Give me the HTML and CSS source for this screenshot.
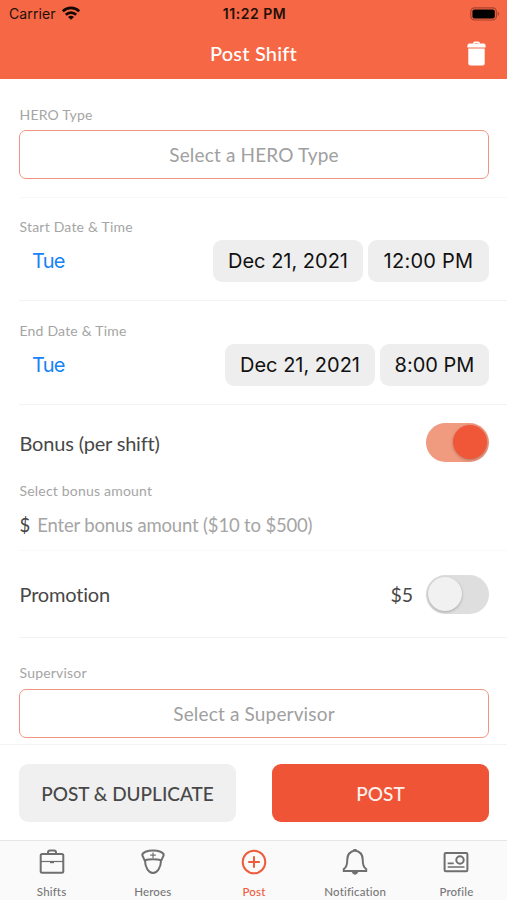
FILE: index.html
```html
<!DOCTYPE html>
<html lang="en">
<head>
<meta charset="utf-8">
<title>Post Shift</title>
<link rel="stylesheet" href="styles.css">
</head>
<body>
<div class="app">
  <header class="header">
    <div class="status">
      <div class="carrier"><span>Carrier</span>
        <svg class="wifi" width="18" height="14" viewBox="0 0 18 14"><g fill="none" stroke="#160905" stroke-width="2.7"><path d="M.8 5.300a11.600 11.600 0 0 1 16.400 0"/><path d="M3.800 8.700a7.400 7.400 0 0 1 10.400 0"/></g><path d="M9 13.800 6 10.900a4.200 4.200 0 0 1 6 0z" fill="#160905"/></svg>
      </div>
      <span class="clock">11:22 PM</span>
      <svg class="battery" width="30" height="14" viewBox="0 0 30 14"><rect x=".8" y=".8" width="25.600" height="12.200" rx="3.800" fill="none" stroke="#a8432d" stroke-width="1.200"/><rect x="2.400" y="2.400" width="22.400" height="9" rx="2.200" fill="#000"/><path d="M27.700 4.800c2 .8 2 3.400 0 4.200z" fill="#a8432d"/></svg>
    </div>
    <div class="navbar">
      <h1>Post Shift</h1>
      <svg class="trash" width="19" height="25" viewBox="0 0 19 25" fill="#fff"><path d="M6 2.600Q6 .5 8 .5h3Q13 .5 13 2.600h4Q18.600 2.800 18.600 5v1.500H.4V5Q.4 2.800 2 2.600zM7.500 2.600h4V1.900h-4z" fill-rule="evenodd"/><path d="M1.300 7.600h16.400v15q0 2-2 2H3.300q-2 0-2-2z"/></svg>
    </div>
  </header>

  <main class="form">
    <section class="block hero">
      <div class="label">HERO Type</div>
      <div class="select"><span>Select a HERO Type</span></div>
    </section>
    <section class="block date">
      <div class="label">Start Date &amp; Time</div>
      <div class="row"><span class="day">Tue</span><span class="pill pill-date">Dec 21, 2021</span><span class="pill pill-noon">12:00 PM</span></div>
    </section>
    <section class="block date">
      <div class="label">End Date &amp; Time</div>
      <div class="row"><span class="day">Tue</span><span class="pill pill-date">Dec 21, 2021</span><span class="pill pill-eve">8:00 PM</span></div>
    </section>
    <section class="block bonus">
      <div class="row"><span class="name">Bonus (per shift)</span><span class="toggle on"></span></div>
      <div class="label bonus-label">Select bonus amount</div>
      <div class="amount"><span class="dollar">$</span><span class="placeholder">Enter bonus amount ($10 to $500)</span></div>
    </section>
    <section class="block promo">
      <span class="name">Promotion</span><span class="price">$5</span><span class="toggle"></span>
    </section>
    <section class="block supervisor">
      <div class="label">Supervisor</div>
      <div class="select"><span>Select a Supervisor</span></div>
    </section>
  </main>

  <div class="actions">
    <div class="button"><span>POST &amp; DUPLICATE</span></div>
    <div class="button primary"><span>POST</span></div>
  </div>

  <nav class="tabs">
    <div class="tab"><svg width="28" height="28" viewBox="0 0 28 28"><rect x="2.700" y="6" width="22.600" height="18.800" rx="1.500"/><path d="M10 6V4.500Q10 2.500 12 2.500h4q2 0 2 2V6"/><path d="M3 13.500h22" stroke-width="1.200"/><path d="M12 14.200h4" stroke-width="2"/></svg><span>Shifts</span></div>
    <div class="tab"><svg width="28" height="28" viewBox="0 0 28 28"><path d="M5.600 12.300 3.300 7.200C3.100 4.400 8.500 2.500 14 2.500s10.900 1.900 10.700 4.700l-2.300 5.100C18 10.800 10 10.800 5.600 12.300z"/><path d="M6 12.500c0 6.500 3.500 12.500 8 12.500s8-6 8-12.500"/><path d="M14 4.500v5.500M11.200 7.200h5.600" stroke-width="1.200"/></svg><span>Heroes</span></div>
    <div class="tab active"><svg width="28" height="28" viewBox="0 0 28 28"><circle cx="14" cy="14" r="11.300"/><path d="M14 8.200v11.600M8.200 14h11.600"/></svg><span>Post</span></div>
    <div class="tab"><svg width="28" height="28" viewBox="0 0 28 28"><path d="M14 2.400c-5.500 1-7.700 4.300-7.700 9 0 5-.7 8-3.500 9.600v2h22.400v-2c-2.800-1.600-3.500-4.600-3.500-9.600 0-4.700-2.200-8-7.700-9z"/><path d="M10.700 24h6.600q-1 2.700-3.300 2.700T10.700 24z" fill="#6f6f6f" stroke="none"/><path d="M12.500 2h3" stroke-width="2"/></svg><span>Notification</span></div>
    <div class="tab"><svg width="28" height="28" viewBox="0 0 28 28"><rect x="2.600" y="5" width="22.800" height="18.300" rx="1.200"/><circle cx="18" cy="12" r="3.700"/><path d="M5.700 15.400h6M5.700 19h16.800" stroke-width="1.700"/></svg><span>Profile</span></div>
  </nav>
</div>
</body>
</html>
```
FILE: styles.css
```css
* { box-sizing: border-box; }
body { margin: 0; background: #fff; font-family: Lato, "Liberation Sans", sans-serif; font-variant-ligatures: none; }
.app { width: 507px; height: 900px; display: flex; flex-direction: column; overflow: hidden; }
span, h1, .label { white-space: nowrap; }

.header { height: 79px; background: #f66745; color: #fff; flex: none; }
.status { height: 28px; padding: 0 7px 0 9px; display: grid; grid-template-columns: 1fr auto 1fr; align-items: center; font: 400 14px/28px Inter, sans-serif; color: #24100a; }
.carrier { display: flex; align-items: center; gap: 6px; letter-spacing: .1px; }
.wifi { margin-top: -2px; }
.clock { font-weight: 600; letter-spacing: .55px; }
.battery { justify-self: end; margin-top: -1px; }
.navbar { height: 50px; padding: 0 21px; display: grid; grid-template-columns: 1fr auto 1fr; align-items: center; }
h1 { grid-column: 2; margin: 0; font-size: 20px; line-height: 48px; font-weight: 500; letter-spacing: .2px; }
.trash { justify-self: end; }

.form { height: 665px; flex: none; }
.block { margin-left: 19px; padding-right: 18px; border-bottom: 1px solid #f2f2f2; }
.label { font-size: 14px; line-height: 20px; color: #a5a5a5; letter-spacing: .2px; padding-left: .5px; }
.select { height: 49px; border: 1px solid #f19583; border-radius: 7px; display: flex; align-items: center; justify-content: center; font-size: 19px; letter-spacing: .16px; color: #a0a0a0; }
.row { display: flex; align-items: center; }

.hero { height: 119px; padding-top: 26px; border-color: #f8f8f8; }
.hero .select { margin-top: 5px; }
.date { height: 104px; padding-top: 20px; }
.date:nth-child(2) { height: 103px; padding-top: 19px; }
.date:nth-child(2) .row { margin-top: 3px; }
.date .row { height: 42px; margin-top: 3px; font-family: Inter, sans-serif; font-size: 20px; }
.day { margin: 0 auto 0 13px; color: #1683f7; letter-spacing: -.8px; }
.pill { height: 42px; border-radius: 9px; background: #eee; color: #111; line-height: 42px; text-align: center; margin-left: 5px; }
.pill-date { width: 150px; }
.pill-noon { width: 121px; letter-spacing: .25px; }
.pill-eve { width: 109px; }

.bonus { height: 146px; padding-top: 18px; border-color: #f9f9f9; }
.name { font-size: 20px; color: #484848; margin-right: auto; padding-left: .5px; letter-spacing: -.18px; }
.toggle { width: 63px; height: 39px; border-radius: 20px; background: #dedede; padding: 2px; display: flex; }
.toggle::before { content: ""; width: 34px; height: 34px; border-radius: 50%; background: #f1f1f1; box-shadow: 0 1px 3px rgba(0,0,0,.25); }
.toggle.on { background: #f09a80; justify-content: flex-end; }
.toggle.on::before { background: #f05638; }
.bonus-label { margin-top: 19px; }
.amount { display: flex; align-items: center; height: 30px; margin-top: 9px; gap: 7px; font-size: 18.500px; color: #a5a5a5; }
.dollar { color: #444; padding-left: .5px; }
.placeholder { letter-spacing: -.17px; }
.promo { height: 87px; display: flex; align-items: center; }
.price { font-size: 19.500px; color: #484848; margin-right: 13px; }
.supervisor { padding-top: 25px; border: 0; }
.supervisor .select { margin-top: 6px; }

.actions { height: 96px; border-top: 1px solid #f1f4f4; padding: 19px 18px 0 19px; display: grid; grid-template-columns: 217px 217px; justify-content: space-between; flex: none; }
.button { height: 58px; border-radius: 9px; background: #f0f0f0; color: #484848; font-size: 19px; font-weight: 500; display: flex; align-items: center; justify-content: center; }
.primary { background: #ef5437; color: #fff1ec; }

.tabs { height: 60px; background: #fafafa; border-top: 1px solid #e6e6e6; display: grid; grid-template-columns: repeat(5, 1fr); flex: none; padding-left: 1px; }
.tab { display: flex; flex-direction: column; align-items: center; padding-top: 7px; color: #777; font-size: 11.500px; line-height: 16px; font-weight: 500; letter-spacing: .15px; }
.tab svg { fill: none; stroke: #6f6f6f; stroke-width: 2; margin-bottom: 8px; flex: none; }
.tab.active { color: #ef5b3d; }
.active svg { stroke: #ef5b3d; }
```
